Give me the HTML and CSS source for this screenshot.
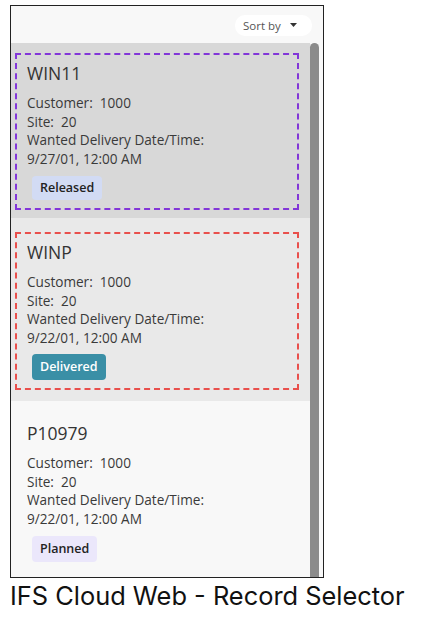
FILE: index.html
```html
<html>
<head>
  <title>IFS Cloud Web - Record Selector</title>
  <link rel="stylesheet" href="styles.css">
</head>
<body>
  <div class="frame">
    <div class="topbar">
      <button class="sort">Sort by
        <svg width="7" height="4" viewBox="0 0 7 4"><path d="M0 0 L7 0 L3.5 4 Z" fill="#333"/></svg>
      </button>
    </div>
    <div class="content">
      <div class="list">
        <div class="card selected">
          <div class="record purple">
            <h3>WIN11</h3>
            <div class="line">Customer:&nbsp;&nbsp;1000</div>
            <div class="line">Site:&nbsp;&nbsp;20</div>
            <div class="line">Wanted Delivery Date/Time:</div>
            <div class="line">9/27/01, 12:00 AM</div>
            <span class="badge released">Released</span>
          </div>
        </div>
        <div class="card focused">
          <div class="record red">
            <h3>WINP</h3>
            <div class="line">Customer:&nbsp;&nbsp;1000</div>
            <div class="line">Site:&nbsp;&nbsp;20</div>
            <div class="line">Wanted Delivery Date/Time:</div>
            <div class="line">9/22/01, 12:00 AM</div>
            <span class="badge delivered">Delivered</span>
          </div>
        </div>
        <div class="card plain">
          <div class="record">
            <h3>P10979</h3>
            <div class="line">Customer:&nbsp;&nbsp;1000</div>
            <div class="line">Site:&nbsp;&nbsp;20</div>
            <div class="line">Wanted Delivery Date/Time:</div>
            <div class="line">9/22/01, 12:00 AM</div>
            <span class="badge planned">Planned</span>
          </div>
        </div>
      </div>
      <div class="scrollbar"><div class="thumb"></div></div>
    </div>
  </div>
  <div class="caption">IFS Cloud Web - Record Selector</div>
</body>
</html>
```

FILE: styles.css
```css
body {
  margin: 0;
  background: #fff;
  font-family: "Open Sans", sans-serif;
}
.frame {
  margin: 5px 0 0 10px;
  width: 312px;
  height: 571px;
  border: 1px solid #222;
  background: #f8f8f8;
  display: flex;
  flex-direction: column;
}
.topbar {
  height: 37px;
  display: flex;
  align-items: center;
  justify-content: flex-end;
  padding-right: 11px;
}
.sort {
  height: 21px;
  width: 77px;
  margin-top: 1px;
  border: none;
  border-radius: 10px;
  background: #fff;
  font-family: "Open Sans", sans-serif;
  font-size: 11.5px;
  color: #555;
  display: flex;
  align-items: center;
  justify-content: flex-start;
  padding: 0 0 0 8px;
  gap: 9px;
}
.content {
  flex: 1;
  display: flex;
  overflow: hidden;
}
.list {
  width: 301px;
  display: flex;
  flex-direction: column;
}
.card {
  padding-left: 4px;
  padding-right: 11px;
}
.card.selected {
  background: #d8d8d8;
  padding-top: 10px;
  padding-bottom: 8px;
}
.card.focused {
  background: #e9e9e9;
  padding-top: 14px;
  padding-bottom: 11px;
}
.card.plain {
  flex: 1;
  background: #f8f8f8;
  padding-top: 12px;
}
.record {
  border: 2px dashed transparent;
  padding: 6px 10px 8px 10px;
  color: #3a3a3a;
}
.record.purple {
  border-color: #8236d8;
}
.record.red {
  border-color: #e9504c;
}
h3 {
  margin: 0 0 9px 0;
  font-size: 17.5px;
  font-weight: 400;
  line-height: 24px;
  color: #333;
}
.line {
  font-size: 13.6px;
  line-height: 18.5px;
}
.badge {
  display: inline-block;
  margin: 8px 0 0 5px;
  height: 24px;
  line-height: 24px;
  padding: 0 8px;
  border-radius: 4px;
  font-size: 12.5px;
  font-weight: 600;
  color: #222;
}
.badge.released {
  background: #d2dbf4;
}
.badge.delivered {
  background: #3a8fa6;
  color: #fff;
  height: 26px;
  line-height: 26px;
  margin-top: 7px;
}
.badge.planned {
  background: #ebe7fb;
  height: 26px;
  line-height: 26px;
}
.scrollbar {
  width: 11px;
  padding-right: 2px;
}
.thumb {
  width: 9px;
  height: 100%;
  background: #8b8b8b;
  border-radius: 5px 5px 0 0;
}
.caption {
  margin: 2px 0 0 10px;
  font-family: Inter, sans-serif;
  font-size: 25.4px;
  color: #111;
}
```
